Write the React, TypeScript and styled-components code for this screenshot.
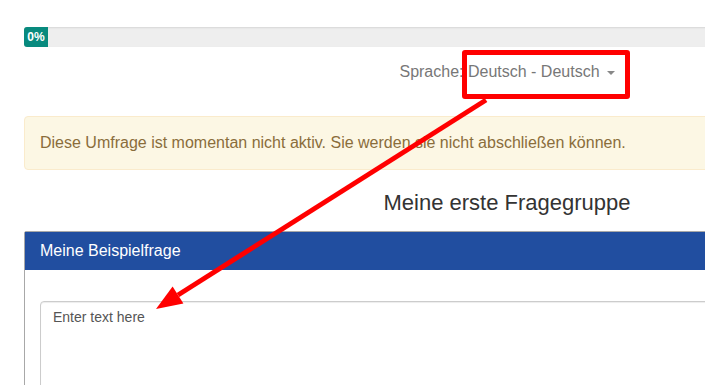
import React from "react";
import styled, { createGlobalStyle } from "styled-components";

const GlobalStyle = createGlobalStyle`
  html, body {
    margin: 0;
    padding: 0;
    overflow: hidden;
    background: #fff;
  }
  body {
    font-family: "Liberation Sans", Arial, sans-serif;
    color: #333;
  }
`;

const Page = styled.div`
  position: relative;
  width: 705px;
  height: 385px;
  overflow: hidden;
`;

const Container = styled.div`
  width: 966px;
  margin-left: 24px;
  padding-top: 27px;
  display: flex;
  flex-direction: column;
`;

const Progress = styled.div`
  height: 20px;
  background: #eeeeee;
  border-radius: 3px;
  box-shadow: inset 0 1px 2px rgba(0, 0, 0, 0.1);
  display: flex;
`;

const ProgressBar = styled.div`
  width: 24px;
  background: #088a7e;
  color: #fff;
  font-size: 12px;
  font-weight: bold;
  line-height: 20px;
  text-align: center;
  border-radius: 3px 0 0 3px;
`;

const LangRow = styled.div`
  margin-top: 14px;
  display: flex;
  justify-content: center;
  align-items: center;
  font-size: 16px;
  line-height: 22px;
  color: #777;
`;

const Caret = styled.span`
  display: inline-block;
  margin-left: 7px;
  margin-top: 2px;
  width: 0;
  height: 0;
  border-left: 4px solid transparent;
  border-right: 4px solid transparent;
  border-top: 4px solid #888;
`;

const Alert = styled.div`
  margin-top: 33px;
  padding: 15px 15px;
  background: #fcf7e4;
  border: 1px solid #faebcc;
  border-radius: 4px;
  color: #8a6d3b;
  font-size: 16px;
  line-height: 22px;
`;

const GroupTitle = styled.h3`
  margin: 19px 0 0;
  text-align: center;
  font-size: 22px;
  font-weight: normal;
  line-height: 28px;
  color: #333;
`;

const Panel = styled.div`
  margin-top: 14px;
  border: 1px solid #a8a8a8;
  border-radius: 2px 2px 0 0;
`;

const PanelHeader = styled.div`
  background: #214ea0;
  color: #fff;
  font-size: 16px;
  line-height: 20px;
  padding: 9px 15px 9px 15px;
`;

const PanelBody = styled.div`
  padding: 31px 15px 20px;
`;

const TextArea = styled.div`
  height: 120px;
  border: 1px solid #ccc;
  border-radius: 4px;
  box-shadow: inset 0 1px 1px rgba(0, 0, 0, 0.075);
  padding: 6px 12px;
  font-size: 14px;
  line-height: 18px;
  color: #555;
`;

const Highlight = styled.div`
  position: absolute;
  left: 462px;
  top: 50px;
  width: 168px;
  height: 49px;
  box-sizing: border-box;
  border: 5px solid #ff0000;
  border-radius: 3px;
  pointer-events: none;
`;

const Overlay = styled.svg`
  position: absolute;
  left: 0;
  top: 0;
  pointer-events: none;
`;

export default function App() {
  return (
    <Page>
      <GlobalStyle />
      <Container>
        <Progress>
          <ProgressBar>0%</ProgressBar>
        </Progress>
        <LangRow>
          Sprache: Deutsch - Deutsch
          <Caret />
        </LangRow>
        <Alert>
          Diese Umfrage ist momentan nicht aktiv. Sie werden sie nicht abschließen können.
        </Alert>
        <GroupTitle>Meine erste Fragegruppe</GroupTitle>
        <Panel>
          <PanelHeader>Meine Beispielfrage</PanelHeader>
          <PanelBody>
            <TextArea>Enter text here</TextArea>
          </PanelBody>
        </Panel>
      </Container>
      <Highlight />
      <Overlay width="705" height="385" viewBox="0 0 705 385">
        <line x1="486" y1="100" x2="178" y2="295" stroke="#ff0000" strokeWidth="5" />
        <polygon points="156,309 172.6,286.6 183.4,303.6" fill="#ff0000" />
      </Overlay>
    </Page>
  );
}
